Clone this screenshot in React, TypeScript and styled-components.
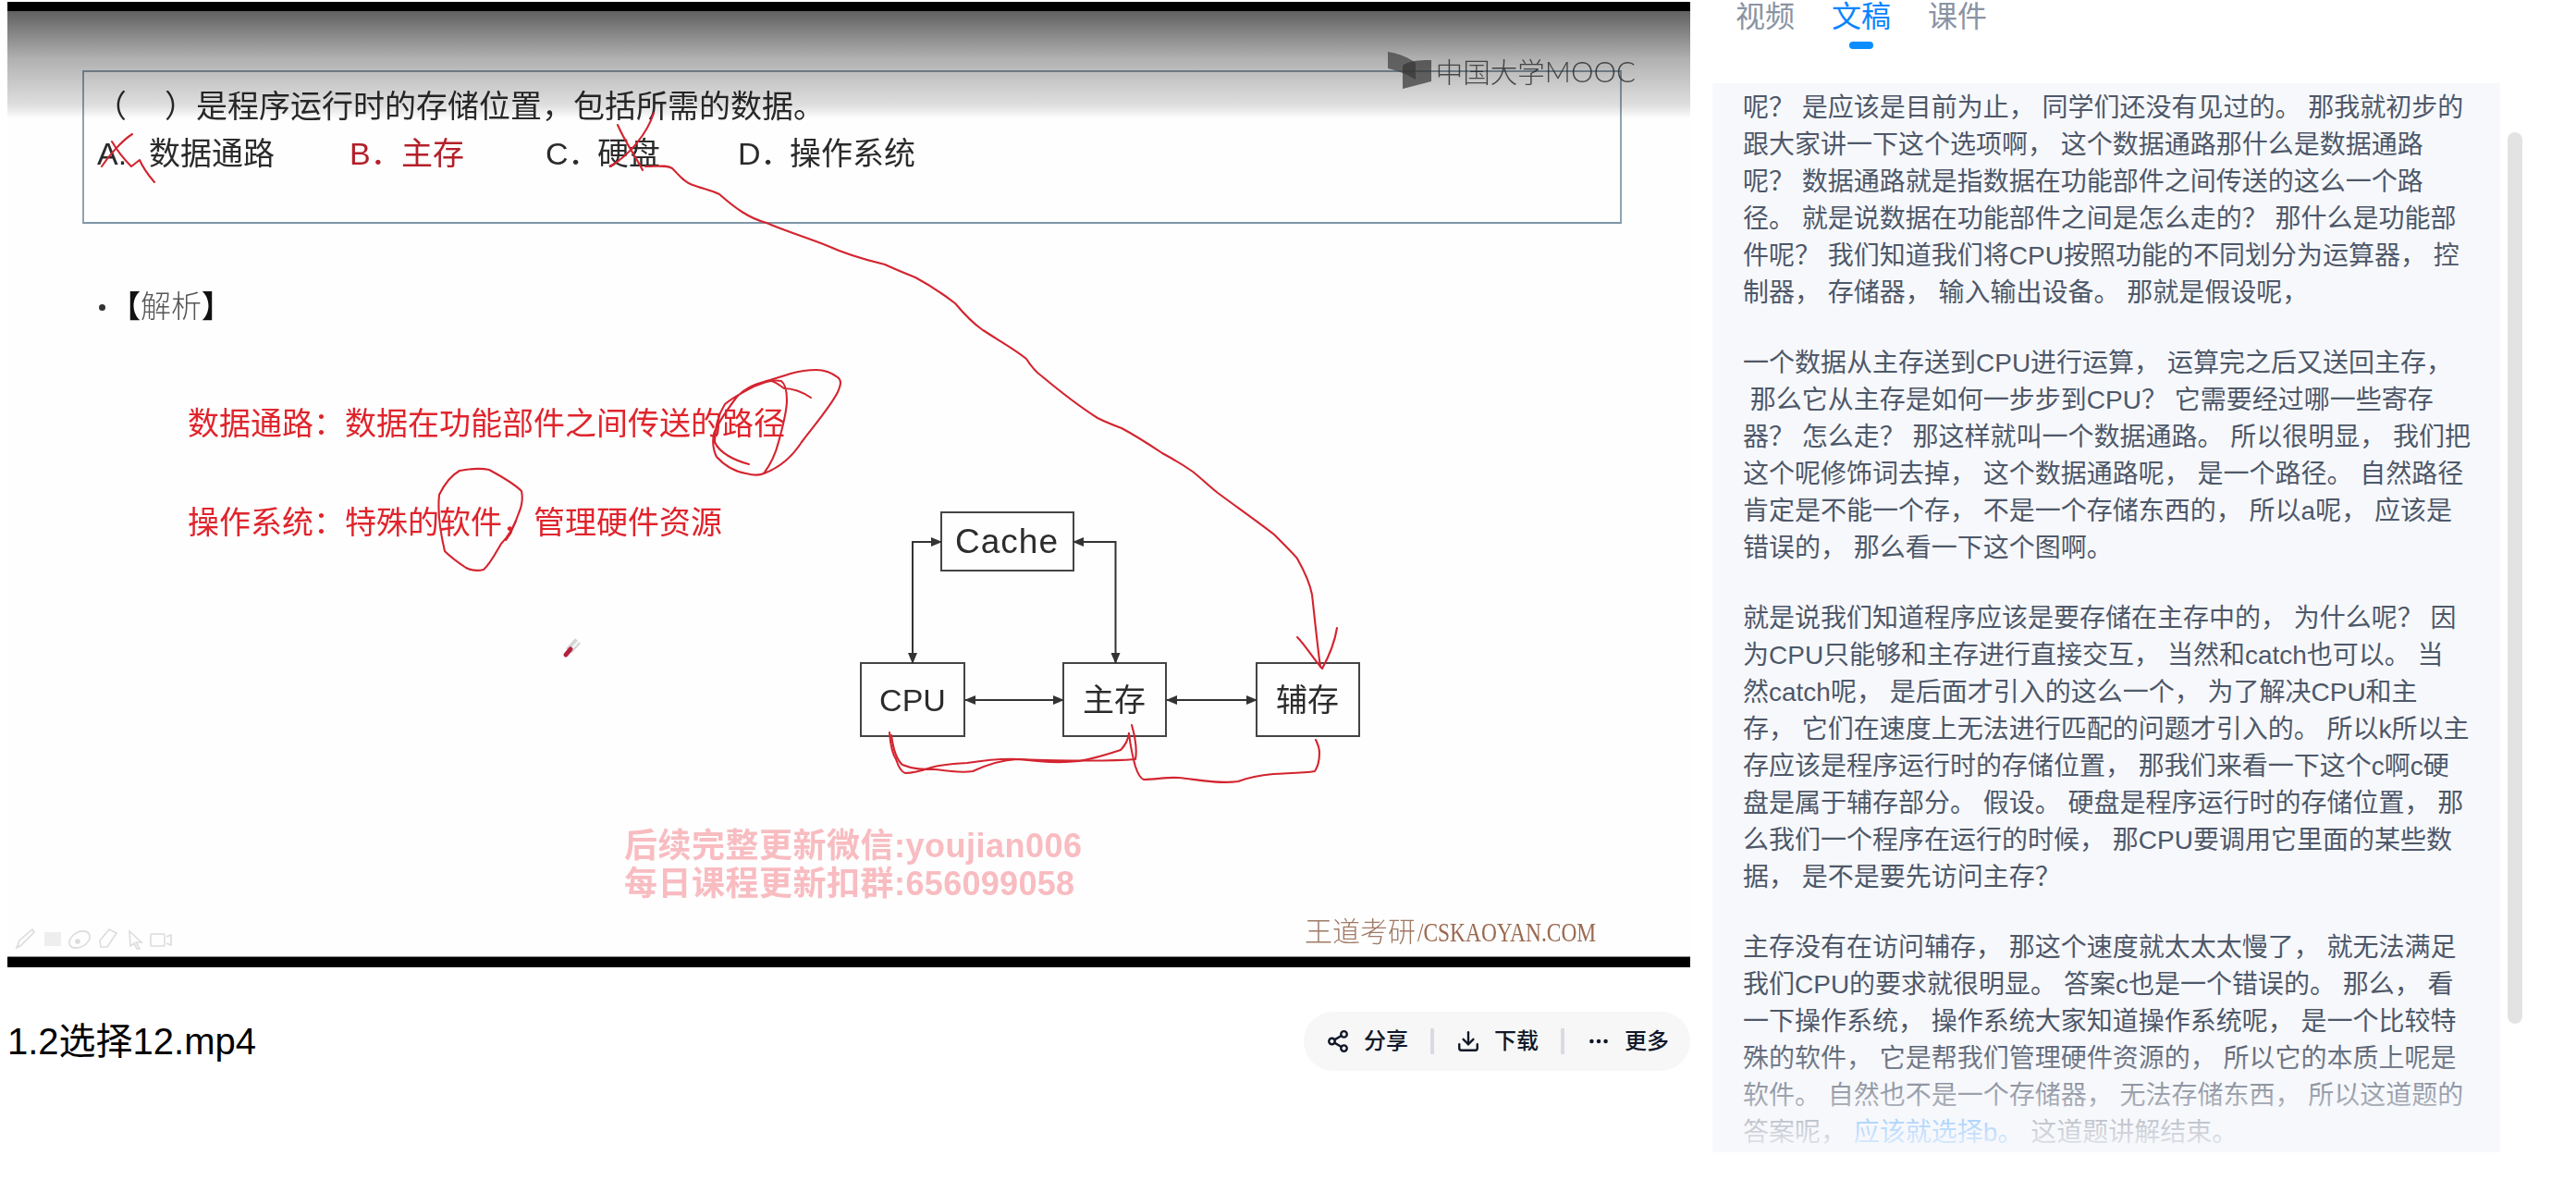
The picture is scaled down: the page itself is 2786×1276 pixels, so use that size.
import React from "react";
import styled, { createGlobalStyle } from "styled-components";
import { Share2, Download, Ellipsis } from "lucide-react";

const Global = createGlobalStyle`
  html, body { margin: 0; padding: 0; background: #fff; }
  body { font-family: "Liberation Sans", "Noto Sans CJK SC", sans-serif; overflow: hidden; }
  * { box-sizing: border-box; }
`;

const Page = styled.div`
  display: flex;
  gap: 24px;
  width: 2786px;
  height: 1276px;
  padding-left: 8px;
  overflow: hidden;
`;

const LeftColumn = styled.div`
  display: flex;
  flex-direction: column;
  width: 1820px;
  padding-top: 2px;
`;

const Video = styled.div`
  background: #000;
  height: 1044px;
  padding: 10px 0 11px;
`;

const Slide = styled.div`
  position: relative;
  height: 1023px;
  background: #fefefe;
  overflow: hidden;
  border-bottom: 1px solid #888;
`;

const SlideBody = styled.div`
  display: flex;
  flex-direction: column;
  padding-top: 64px;
  filter: blur(0.45px);
`;

const QuestionBox = styled.div`
  width: 1665px;
  height: 166px;
  margin-left: 81px;
  padding: 12px 0 0 12px;
  border: 2px solid #8fa3b0;
  border-bottom-color: #7e95a5;
  color: #2b2b2b;
  font-size: 34px;
  line-height: 51px;
`;

const QuestionLine = styled.div`
  white-space: nowrap;
  font-weight: 400;
`;

const Blank = styled.span`
  display: inline-block;
  width: 41px;
`;

const Options = styled.div`
  display: flex;
  margin-left: 2px;
`;

const Option = styled.div<{ $offset?: number; $correct?: boolean }>`
  display: flex;
  margin-left: ${(p) => p.$offset ?? 0}px;
  white-space: nowrap;
  color: ${(p) => (p.$correct ? "#b3202a" : "#2b2b2b")};
`;

const OptionLetter = styled.span`
  width: 56px;
`;

const Heading = styled.div`
  display: flex;
  align-items: center;
  gap: 5px;
  margin: 70px 0 0 99px;
  font-size: 33px;
  line-height: 40px;
  color: #555;
  font-weight: 300;
`;

const Bullet = styled.span`
  width: 7px;
  height: 7px;
  border-radius: 50%;
  background: #333;
`;

const Bracket = styled.span`
  color: #111;
  font-weight: 700;
`;

const Analysis = styled.div`
  display: flex;
  flex-direction: column;
  gap: 57px;
  margin: 81px 0 0 195px;
`;

const AnalysisLine = styled.div`
  font-size: 34px;
  line-height: 50px;
  color: #e0242c;
  white-space: nowrap;
`;

const Fade = styled.div`
  position: absolute;
  left: 0;
  right: 0;
  top: 0;
  height: 116px;
  background: linear-gradient(
    to bottom,
    rgba(0, 0, 0, 0.62) 0%,
    rgba(0, 0, 0, 0.3) 45%,
    rgba(0, 0, 0, 0.12) 88%,
    rgba(0, 0, 0, 0) 100%
  );
`;

const Ink = styled.svg`
  position: absolute;
  left: 0;
  top: 0;
  filter: blur(0.4px);
`;

const MoocLogo = styled.div`
  position: absolute;
  top: 42px;
  right: 59px;
  display: flex;
  align-items: center;
  gap: 5px;
  height: 44px;
  color: rgba(40, 40, 40, 0.8);
  font-size: 29.5px;
  font-weight: 300;
  white-space: nowrap;
  filter: blur(0.4px);
`;

const MoocLatin = styled.span`
  font-family: "Lato", "Liberation Sans", sans-serif;
  font-size: 31px;
  font-weight: 300;
`;

const Watermark = styled.div`
  position: absolute;
  left: 667px;
  top: 882px;
  display: flex;
  flex-direction: column;
  color: #f8bcc1;
  font-size: 36px;
  font-weight: 700;
  line-height: 41px;
  white-space: nowrap;
  letter-spacing: 0.5px;
  filter: blur(0.4px);
`;

const WatermarkLatin = styled.span<{ $track: number }>`
  letter-spacing: ${(p) => p.$track}px;
`;

const Brand = styled.div`
  position: absolute;
  left: 1403px;
  top: 976px;
  display: flex;
  color: #a07a66;
  font-size: 30px;
  line-height: 40px;
  font-weight: 300;
  white-space: nowrap;
  filter: blur(0.4px);
`;

const BrandLatin = styled.span`
  display: inline-block;
  margin-left: 2px;
  font-family: "Liberation Serif", serif;
  font-weight: 400;
  color: #9b6a50;
  transform: scaleX(0.78);
  transform-origin: left center;
`;

const TitleRow = styled.div`
  display: flex;
  align-items: center;
  justify-content: space-between;
  margin-top: 48px;
  height: 64px;
`;

const Title = styled.div`
  font-size: 40px;
  line-height: 66px;
  color: #000;
  white-space: nowrap;
`;

const Actions = styled.div`
  display: flex;
  align-items: center;
  gap: 24px;
  height: 64px;
  padding: 0 23px 0 24px;
  border-radius: 32px;
  background: #f7f7f8;
`;

const Action = styled.div`
  display: flex;
  align-items: center;
  gap: 15px;
  color: #101828;
  font-size: 24px;
  font-weight: 500;
  line-height: 28px;
  white-space: nowrap;
`;

const ActionDivider = styled.span`
  width: 4px;
  height: 28px;
  background: #d9dbe3;
`;

const RightColumn = styled.div`
  display: flex;
  flex-direction: column;
  width: 876px;
`;

const Tabs = styled.div`
  display: flex;
  gap: 40px;
  height: 90px;
  padding-left: 25px;
`;

const Tab = styled.div<{ $active?: boolean }>`
  position: relative;
  height: 36px;
  font-size: 32px;
  line-height: 36px;
  color: ${(p) => (p.$active ? "#0a84ff" : "#8a93a3")};
  &::after {
    content: "";
    display: ${(p) => (p.$active ? "block" : "none")};
    position: absolute;
    left: 19px;
    top: 45px;
    width: 26px;
    height: 8px;
    border-radius: 4px;
    background: #0a8dff;
  }
`;

const TranscriptRow = styled.div`
  display: flex;
  gap: 8px;
`;

const Transcript = styled.div`
  position: relative;
  width: 852px;
  height: 1156px;
  padding: 7px 0 0 33px;
  background: #f7f8fc;
  overflow: hidden;
  &::after {
    content: "";
    position: absolute;
    left: 0;
    right: 0;
    bottom: 0;
    height: 126px;
    background: linear-gradient(to bottom, rgba(247, 248, 252, 0), rgba(247, 248, 252, 0.92));
  }
`;

const Paragraph = styled.p`
  margin: 0 0 36px;
  font-size: 28px;
  line-height: 40px;
  color: #4e5869;
`;

const TranscriptLine = styled.span`
  display: block;
  white-space: pre;
`;

const Highlight = styled.span`
  color: #1890ff;
`;

const ScrollThumb = styled.div`
  width: 16px;
  height: 964px;
  margin-top: 53px;
  border-radius: 8px;
  background: #e3e3e3;
`;

const RED = "#d3242f";

const inkStrokes = [
  "M143 145 C132 152 118 168 110 180",
  "M121 153 C128 165 136 174 142 180 L151 173 C154 180 161 190 167 197",
  "M668 135 C675 152 688 170 695 184",
  "M707 122 C700 145 680 168 660 180",
  "M698 180 C712 180 720 178 727 182 C735 190 740 197 749 200 C760 204 770 206 778 210 C795 225 810 236 829 241 C850 250 870 256 893 265 C915 275 940 282 957 286 C970 292 980 296 990 300 C1005 308 1020 318 1033 328 C1043 340 1053 350 1063 357 C1080 368 1098 378 1110 388 C1115 396 1120 402 1127 407 C1145 422 1165 438 1187 452 C1197 457 1205 460 1213 463 C1230 472 1245 482 1257 490 C1270 497 1280 503 1290 510 C1300 518 1308 526 1317 533 C1340 550 1360 564 1378 578 C1390 590 1400 600 1403 604 C1412 620 1417 632 1419 643 C1422 670 1425 700 1428 721",
  "M1403 689 C1412 698 1420 712 1430 723 C1436 712 1443 698 1446 679",
  "M877 430 C868 424 858 420 848 420 C840 414 835 411 829 412 C815 416 805 420 797 429 C785 445 776 458 772 469 C770 480 772 488 775 494 C785 505 795 510 807 512 C815 514 822 514 826 512 C835 500 839 490 842 478 C847 460 851 445 851 433 C851 422 849 415 845 412 C835 410 825 414 815 418 C802 425 792 430 784 437 C776 450 773 465 773 478 C778 490 795 498 810 502",
  "M826 512 C845 505 858 492 867 478 C882 458 898 440 906 424 C910 415 910 411 906 408 C898 402 890 400 883 400 C870 400 862 402 855 404 C845 407 838 410 829 412",
  "M475 535 C480 525 488 514 497 509 C508 507 520 506 529 508 C542 515 555 522 564 531 C566 540 564 548 561 555 C556 570 550 580 542 588 C535 600 530 610 523 616 C515 618 510 617 504 614 C495 608 488 603 481 596 C476 575 473 555 475 535",
  "M558 563 C555 570 552 578 547 584",
  "M962 792 C963 805 965 815 969 821 C972 830 975 835 979 836 C988 836 998 833 1007 830 C1020 826 1033 826 1046 825 C1065 822 1085 820 1103 821 C1125 824 1148 825 1167 823 C1185 820 1200 815 1212 811 C1218 805 1220 800 1221 793",
  "M964 795 C966 810 970 822 976 827 C988 832 998 832 1012 832 C1025 834 1040 836 1052 834 C1065 828 1080 822 1100 821 C1130 822 1190 824 1228 821 C1230 810 1228 798 1224 784",
  "M1221 793 C1223 810 1226 822 1228 829 C1231 838 1234 842 1237 843 C1250 843 1262 840 1275 841 C1295 843 1318 848 1339 845 C1352 840 1365 838 1377 837 C1395 836 1410 836 1422 834 C1426 828 1427 820 1427 814 C1427 808 1425 804 1423 800",
];

const paragraphs: React.ReactNode[][] = [
  [
    "呢？ 是应该是目前为止， 同学们还没有见过的。 那我就初步的",
    "跟大家讲一下这个选项啊， 这个数据通路那什么是数据通路",
    "呢？ 数据通路就是指数据在功能部件之间传送的这么一个路",
    "径。 就是说数据在功能部件之间是怎么走的？ 那什么是功能部",
    "件呢？ 我们知道我们将CPU按照功能的不同划分为运算器， 控",
    "制器， 存储器， 输入输出设备。 那就是假设呢，",
  ],
  [
    "一个数据从主存送到CPU进行运算， 运算完之后又送回主存，",
    " 那么它从主存是如何一步步到CPU？ 它需要经过哪一些寄存",
    "器？ 怎么走？ 那这样就叫一个数据通路。 所以很明显， 我们把",
    "这个呢修饰词去掉， 这个数据通路呢， 是一个路径。 自然路径",
    "肯定是不能一个存， 不是一个存储东西的， 所以a呢， 应该是",
    "错误的， 那么看一下这个图啊。",
  ],
  [
    "就是说我们知道程序应该是要存储在主存中的， 为什么呢？ 因",
    "为CPU只能够和主存进行直接交互， 当然和catch也可以。 当",
    "然catch呢， 是后面才引入的这么一个， 为了解决CPU和主",
    "存， 它们在速度上无法进行匹配的问题才引入的。 所以k所以主",
    "存应该是程序运行时的存储位置， 那我们来看一下这个c啊c硬",
    "盘是属于辅存部分。 假设。 硬盘是程序运行时的存储位置， 那",
    "么我们一个程序在运行的时候， 那CPU要调用它里面的某些数",
    "据， 是不是要先访问主存？",
  ],
  [
    "主存没有在访问辅存， 那这个速度就太太太慢了， 就无法满足",
    "我们CPU的要求就很明显。 答案c也是一个错误的。 那么， 看",
    "一下操作系统， 操作系统大家知道操作系统呢， 是一个比较特",
    "殊的软件， 它是帮我们管理硬件资源的， 所以它的本质上呢是",
    "软件。 自然也不是一个存储器， 无法存储东西， 所以这道题的",
    <>
      答案呢， <Highlight>应该就选择b。</Highlight> 这道题讲解结束。
    </>,
  ],
];

function SlideDrawing() {
  return (
    <Ink width={1820} height={1023} viewBox="8 12 1820 1023" fill="none">
      <defs>
        <marker id="head" viewBox="0 0 12 10" refX="11" refY="5" markerWidth="12" markerHeight="10" markerUnits="userSpaceOnUse" orient="auto-start-reverse">
          <path d="M0 0 L12 5 L0 10 Z" fill="#333" />
        </marker>
      </defs>

      <g stroke="#444" strokeWidth={2} fill="#fefefe">
        <rect x={1018} y={554} width={143} height={63} />
        <rect x={931} y={717} width={112} height={79} />
        <rect x={1150} y={717} width={111} height={79} />
        <rect x={1359} y={717} width={111} height={79} />
      </g>

      <g stroke="#333" strokeWidth={2}>
        <path d="M1018 586 H987 V717" markerStart="url(#head)" markerEnd="url(#head)" />
        <path d="M1161 586 H1206.5 V717" markerStart="url(#head)" markerEnd="url(#head)" />
        <path d="M1044 757 H1150" markerStart="url(#head)" markerEnd="url(#head)" />
        <path d="M1262 757 H1359" markerStart="url(#head)" markerEnd="url(#head)" />
      </g>

      <g fill="#2c2c2c" textAnchor="middle" fontSize={35} fontFamily='"Liberation Sans", "Noto Sans CJK SC", sans-serif'>
        <text x={1089} y={598} fontSize={37} letterSpacing={1}>Cache</text>
        <text x={987} y={769} fontSize={34}>CPU</text>
        <text x={1205} y={769} fontSize={34}>主存</text>
        <text x={1414} y={769} fontSize={34}>辅存</text>
      </g>

      <g stroke={RED} strokeWidth={2.1} strokeLinecap="round" strokeLinejoin="round">
        {inkStrokes.map((d) => (
          <path key={d} d={d} />
        ))}
      </g>

      <path d="M615 704 L625 693" stroke="#d4d4d4" strokeWidth={8} />
      <path d="M617 703 L626 693" stroke="#f6f6f6" strokeWidth={2.5} />
      <path d="M612 708 L617 702" stroke="#b5203d" strokeWidth={5} strokeLinecap="round" />

      <g stroke="#dcdcdc" strokeWidth={1.6}>
        <path d="M18 1025 L21 1017 L35 1005 L37 1008 L23 1022 Z" />
        <rect x={48} y={1008} width={18} height={15} fill="#eeeeee" stroke="none" />
        <ellipse cx={86} cy={1016} rx={12} ry={8} transform="rotate(-30 86 1016)" />
        <circle cx={84} cy={1018} r={2} fill="#dcdcdc" />
        <path d="M108 1017 L118 1005 L126 1009 L116 1024 L109 1024 Z" />
        <path d="M140 1007 L153 1019 L147 1019 L151 1026 L148 1026 L145 1020 L141 1023 Z" />
        <rect x={163} y={1010} width={15} height={13} rx={1} />
        <path d="M180 1013 L185 1011 V1022 L180 1020" />
      </g>
    </Ink>
  );
}

export default function App() {
  return (
    <Page>
      <Global />
      <LeftColumn>
        <Video>
          <Slide>
            <SlideBody>
              <QuestionBox>
                <QuestionLine>
                  （<Blank />）是程序运行时的存储位置，包括所需的数据。
                </QuestionLine>
                <Options>
                  <Option>
                    <OptionLetter>A.</OptionLetter>数据通路
                  </Option>
                  <Option $offset={81} $correct>
                    <OptionLetter>B．</OptionLetter>主存
                  </Option>
                  <Option $offset={88}>
                    <OptionLetter>C．</OptionLetter>硬盘
                  </Option>
                  <Option $offset={84}>
                    <OptionLetter>D．</OptionLetter>操作系统
                  </Option>
                </Options>
              </QuestionBox>
              <Heading>
                <Bullet />
                <span>
                  <Bracket>【</Bracket>解析<Bracket>】</Bracket>
                </span>
              </Heading>
              <Analysis>
                <AnalysisLine>数据通路：数据在功能部件之间传送的路径</AnalysisLine>
                <AnalysisLine>操作系统：特殊的软件，管理硬件资源</AnalysisLine>
              </Analysis>
            </SlideBody>
            <Fade />
            <SlideDrawing />
            <MoocLogo>
              <svg width={47} height={40} viewBox="0 0 47 40">
                <path d="M0 0 C12 2 22 6 30 12 L30 30 C20 24 10 20 0 18 Z" fill="#444" fillOpacity={0.75} />
                <path d="M16 15 C24 9 36 9 47 9 L47 32 L16 40 Z" fill="#333" fillOpacity={0.7} />
              </svg>
              <span>
                中国大学<MoocLatin>MOOC</MoocLatin>
              </span>
            </MoocLogo>
            <Watermark>
              <div>
                后续完整更新微信:<WatermarkLatin $track={0.5}>youjian006</WatermarkLatin>
              </div>
              <div>
                每日课程更新扣群:<WatermarkLatin $track={0.3}>656099058</WatermarkLatin>
              </div>
            </Watermark>
            <Brand>
              王道考研<BrandLatin>/CSKAOYAN.COM</BrandLatin>
            </Brand>
          </Slide>
        </Video>
        <TitleRow>
          <Title>1.2选择12.mp4</Title>
          <Actions>
            <Action>
              <Share2 size={26} strokeWidth={2.2} />
              分享
            </Action>
            <ActionDivider />
            <Action>
              <Download size={26} strokeWidth={2.2} />
              下载
            </Action>
            <ActionDivider />
            <Action>
              <Ellipsis size={26} strokeWidth={2.2} />
              更多
            </Action>
          </Actions>
        </TitleRow>
      </LeftColumn>
      <RightColumn>
        <Tabs>
          <Tab>视频</Tab>
          <Tab $active>文稿</Tab>
          <Tab>课件</Tab>
        </Tabs>
        <TranscriptRow>
          <Transcript>
            {paragraphs.map((lines, i) => (
              <Paragraph key={i}>
                {lines.map((line, j) => (
                  <TranscriptLine key={j}>{line}</TranscriptLine>
                ))}
              </Paragraph>
            ))}
          </Transcript>
          <ScrollThumb />
        </TranscriptRow>
      </RightColumn>
    </Page>
  );
}
